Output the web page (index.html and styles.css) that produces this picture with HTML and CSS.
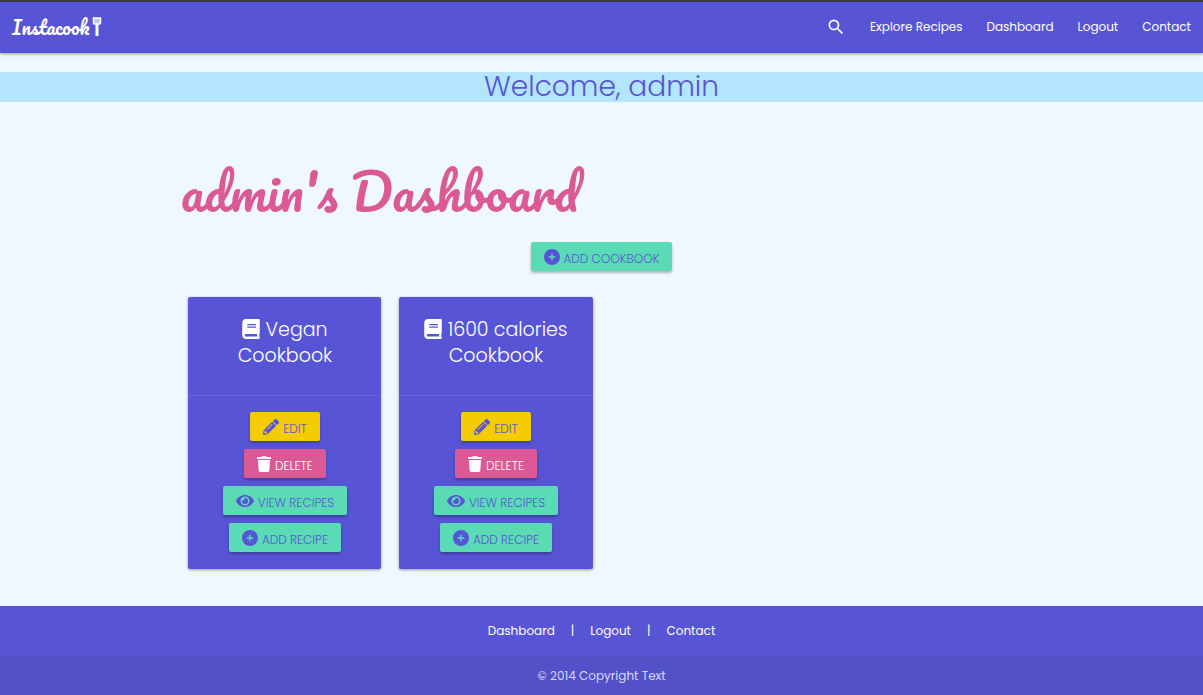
FILE: index.html
```
<!DOCTYPE html>
<html lang="en">
<head>
<meta charset="utf-8">
<meta name="viewport" content="width=device-width, initial-scale=1">
<title>Instacook</title>
<link rel="stylesheet" href="styles.css">
</head>
<body>
<svg class="sprite" aria-hidden="true">
  <symbol id="plus" viewBox="0 0 16 16"><path fill-rule="evenodd" d="M8 0a8 8 0 1 0 0 16A8 8 0 0 0 8 0zM7.300 4.700h1.400v2.600h2.600v1.400H8.700v2.600H7.300V8.700H4.700V7.300h2.600z"/></symbol>
  <symbol id="book" viewBox="0 0 448 512"><path d="M448 360V24c0-13.300-10.700-24-24-24H96C43 0 0 43 0 96v320c0 53 43 96 96 96h328c13.300 0 24-10.700 24-24v-16c0-7.500-3.500-14.300-8.900-18.700-4.200-15.400-4.200-59.300 0-74.700 5.400-4.300 8.900-11.100 8.900-18.600zM128 134c0-3.300 2.700-6 6-6h212c3.300 0 6 2.700 6 6v20c0 3.300-2.700 6-6 6H134c-3.300 0-6-2.700-6-6v-20zm0 64c0-3.300 2.700-6 6-6h212c3.300 0 6 2.700 6 6v20c0 3.300-2.700 6-6 6H134c-3.300 0-6-2.700-6-6v-20zm253.400 250H96c-17.700 0-32-14.300-32-32 0-17.600 14.400-32 32-32h285.400c-1.900 17.100-1.900 46.900 0 64z"/></symbol>
  <symbol id="pencil" viewBox="0 0 512 512"><path d="M497.900 142.100l-46.100 46.100c-4.700 4.700-12.300 4.700-17 0l-111-111c-4.700-4.700-4.700-12.300 0-17l46.100-46.100c18.700-18.700 49.100-18.700 67.900 0l60.100 60.100c18.800 18.700 18.800 49.100 0 67.900zM284.200 99.800L21.600 362.400.4 483.900c-2.900 16.400 11.400 30.600 27.800 27.800l121.500-21.300 262.600-262.600c4.700-4.700 4.700-12.300 0-17l-111-111c-4.800-4.700-12.400-4.700-17.100 0zM124.100 339.900c-5.500-5.500-5.500-14.300 0-19.800l154-154c5.500-5.500 14.300-5.500 19.800 0s5.500 14.300 0 19.800l-154 154c-5.500 5.500-14.300 5.500-19.800 0zM88 424h48v36.300l-64.500 11.300-31.100-31.100L51.700 376H88v48z"/></symbol>
  <symbol id="trash" viewBox="0 0 448 512"><path d="M432 32H312l-9.400-18.700A24 24 0 0 0 281.100 0H166.800a24 24 0 0 0-21.400 13.300L136 32H16A16 16 0 0 0 0 48v32a16 16 0 0 0 16 16h416a16 16 0 0 0 16-16V48a16 16 0 0 0-16-16zM32 128l21.200 339a48 48 0 0 0 47.900 45h245.800a48 48 0 0 0 47.900-45L416 128z"/></symbol>
  <symbol id="eye" viewBox="0 0 576 512"><path d="M572.500 241.400C518.300 135.600 410.900 64 288 64S57.700 135.600 3.500 241.400a32.400 32.400 0 0 0 0 29.200C57.700 376.400 165.100 448 288 448s230.300-71.600 284.500-177.400a32.400 32.400 0 0 0 0-29.200zM288 400a144 144 0 1 1 144-144 143.900 143.900 0 0 1-144 144zm0-240a95.300 95.300 0 0 0-25.300 3.800 47.900 47.900 0 0 1-66.900 66.900A95.800 95.800 0 1 0 288 160z"/></symbol>
</svg>

<header class="navbar">
  <a class="brand" href="#">Instacook<svg class="spatula" viewBox="0 0 10 22" aria-hidden="true"><path d="M1.500 2h7v5q0 1-1 1h-5q-1 0-1-1z" fill="#c5c3f5" stroke="#fff" stroke-width="1.500"/><path d="M5 8v12" stroke="#fff" stroke-width="3"/></svg></a>
  <nav class="nav-links" aria-label="Main">
    <a href="#" aria-label="Search"><svg class="search" viewBox="0 0 24 24"><path d="M15.500 14h-.79l-.28-.27A6.470 6.470 0 0 0 16 9.500 6.500 6.500 0 1 0 9.500 16c1.610 0 3.090-.59 4.230-1.570l.27.280v.79l5 4.990L20.490 19l-4.990-5zm-6 0C7.010 14 5 11.990 5 9.500S7.010 5 9.500 5 14 7.010 14 9.500 11.990 14 9.500 14z"/></svg></a>
    <a href="#">Explore Recipes</a>
    <a href="#">Dashboard</a>
    <a href="#">Logout</a>
    <a href="#">Contact</a>
  </nav>
</header>

<h4 class="flash">Welcome, admin</h4>

<main class="container">
  <h1 class="title">admin's Dashboard</h1>
  <div class="toolbar">
    <button class="btn mint"><svg class="icon"><use href="#plus"/></svg><span>Add Cookbook</span></button>
  </div>
  <div class="cards">
    <article class="card">
      <h2 class="card-title"><svg class="book"><use href="#book"/></svg> Vegan Cookbook</h2>
      <div class="actions">
        <button class="btn yellow"><svg class="icon"><use href="#pencil"/></svg><span>Edit</span></button>
        <button class="btn pink"><svg class="icon narrow"><use href="#trash"/></svg><span>Delete</span></button>
        <button class="btn mint"><svg class="icon wide"><use href="#eye"/></svg><span>View Recipes</span></button>
        <button class="btn mint"><svg class="icon"><use href="#plus"/></svg><span>Add Recipe</span></button>
      </div>
    </article>
    <article class="card">
      <h2 class="card-title"><svg class="book"><use href="#book"/></svg> 1600 calories Cookbook</h2>
      <div class="actions">
        <button class="btn yellow"><svg class="icon"><use href="#pencil"/></svg><span>Edit</span></button>
        <button class="btn pink"><svg class="icon narrow"><use href="#trash"/></svg><span>Delete</span></button>
        <button class="btn mint"><svg class="icon wide"><use href="#eye"/></svg><span>View Recipes</span></button>
        <button class="btn mint"><svg class="icon"><use href="#plus"/></svg><span>Add Recipe</span></button>
      </div>
    </article>
  </div>
</main>

<footer class="footer">
  <nav class="footer-links" aria-label="Footer">
    <a href="#">Dashboard</a><span>|</span><a href="#">Logout</a><span>|</span><a href="#">Contact</a>
  </nav>
  <p class="copyright">© 2014 Copyright Text</p>
</footer>
</body>
</html>
```
FILE: styles.css
```
* { box-sizing: border-box; }
body {
  margin: 0;
  min-height: 100vh;
  display: flex;
  flex-direction: column;
  background: #f0f8ff;
  color: #fff;
  font-family: Poppins, Inter, sans-serif;
  font-size: 12px;
}
a { color: inherit; text-decoration: none; }
h1, h2, h4, p { margin: 0; font-weight: 300; }
svg { fill: currentColor; }
.sprite { display: none; }

.navbar {
  display: flex;
  align-items: center;
  justify-content: space-between;
  height: 53px;
  padding: 0 12px 2px;
  border-top: 2px solid #3d3b46;
  background: #5755d5;
  box-shadow: 0 1px 3px rgba(0, 0, 0, .4);
}
.brand {
  display: flex;
  align-items: center;
  gap: 3px;
  font: 400 19px Pacifico, Lato, cursive;
}
.spatula { width: 10px; height: 22px; }
.nav-links { display: flex; align-items: center; gap: 24px; }
.search { display: block; width: 20px; height: 20px; }

.flash {
  margin-top: 19px;
  background: #b3e5fc;
  color: #5755d5;
  font-size: 28px;
  line-height: 30px;
  text-align: center;
}

.container { width: 70%; margin: 0 auto; flex: 1; }
.title {
  margin-top: 56px;
  color: #db5a95;
  font: 400 50px/66px Pacifico, Lato, cursive;
}
.toolbar { display: flex; justify-content: center; margin-top: 18px; }

.btn {
  display: flex;
  align-items: center;
  gap: 4px;
  height: 29px;
  padding: 0 13px;
  border: 0;
  border-radius: 2px;
  box-shadow: 0 2px 3px rgba(0, 0, 0, .28);
  color: #5755d5;
  font: 300 12px/29px Poppins, Inter, sans-serif;
  text-transform: uppercase;
  cursor: pointer;
}
.btn span { padding-top: 3px; }
.mint { background: #5bdbb5; }
.yellow { background: #f3cc04; }
.pink { background: #db5a95; color: #fff; }
.icon { width: 16px; height: 16px; }
.narrow { width: 14px; }
.wide { width: 18px; }

.cards {
  display: grid;
  grid-template-columns: repeat(4, 1fr);
  gap: 18px;
  margin: 26px 8px 37px;
}
.card {
  border-radius: 2px;
  background: #5755d5;
  box-shadow: 0 1px 3px rgba(0, 0, 0, .4);
}
.card-title {
  min-height: 98px;
  padding: 20px 18px;
  font-size: 19px;
  line-height: 26px;
  text-align: center;
}
.book { width: 18px; height: 20px; vertical-align: -3px; }
.actions {
  display: flex;
  flex-direction: column;
  align-items: center;
  gap: 8px;
  padding: 16px 18px 17px;
  border-top: 1px solid #6664cf;
}

.footer { background: #5755d5; text-align: center; }
.footer-links { display: flex; justify-content: center; gap: 16px; line-height: 50px; }
.copyright {
  background: #5351c8;
  color: #d8d7f5;
  font-weight: 400;
  line-height: 39px;
}
```
